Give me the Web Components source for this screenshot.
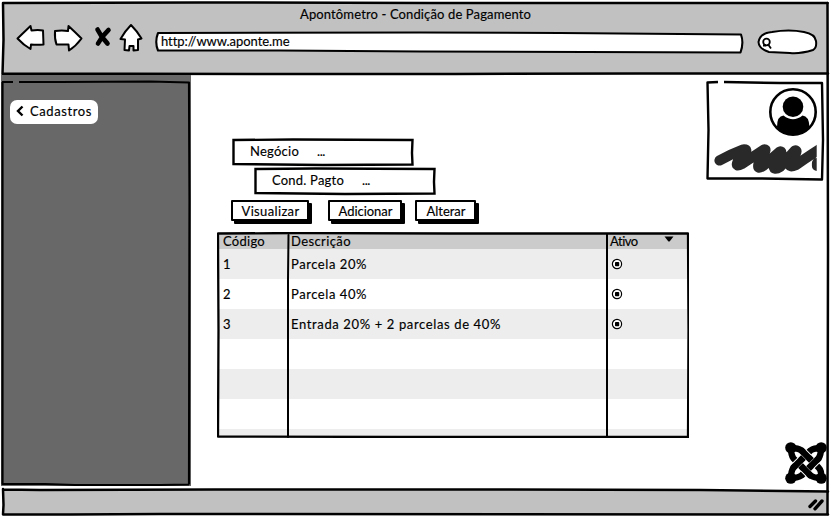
<!DOCTYPE html>
<html lang="pt-BR">
<head>
<meta charset="utf-8">
<title>Apontômetro - Condição de Pagamento</title>
<style>
body{margin:0;background:#fff;color:#000;font:13px/16px Lato,"Open Sans",sans-serif;overflow:hidden}
</style>
</head>
<body>
<app-window></app-window>
<script>
// Shared base: clones a template into an open shadow root.
const define = (name, css, html, setup) => {
  const t = document.createElement('template');
  t.innerHTML = `<style>*{box-sizing:border-box}:host{box-sizing:border-box}svg.art{position:absolute;left:0;top:0;overflow:visible;pointer-events:none}.ink{fill:none;stroke:#000;stroke-width:2.5;stroke-linecap:round;stroke-linejoin:round}${css}</style>${html}`;
  customElements.define(name, class extends HTMLElement {
    constructor() { super(); this.attachShadow({mode: 'open'}).append(t.content.cloneNode(true)); }
    connectedCallback() { if (setup) setup(this, this.shadowRoot); }
  });
};

// Text label whose tracking is adjusted to the width given in "w".
define('ui-label', ':host{display:inline-block;flex:none;white-space:nowrap;height:16px;-webkit-text-stroke:.15px #000}span{display:inline-block}', '<span><slot></slot></span>', (el, root) => {
  const w = +el.getAttribute('w'), s = root.querySelector('span');
  const n = +el.getAttribute('chars') || el.textContent.length;
  el.style.width = w + 'px';
  s.style.letterSpacing = ((w - s.getBoundingClientRect().width) / n).toFixed(3) + 'px';
});

define('nav-icons', ':host{display:flex;width:128px;height:30px}svg{overflow:visible}', `
<svg width="128" height="30" viewBox="16 23 128 30" fill="#fff" stroke="#000" stroke-width="2" stroke-linejoin="round" stroke-linecap="round">
<path d="M17.5 38.5 30.5 26 31.5 30.5Q38 29.500 43 30.500L43.500 44.500Q37 45 31 44.500L30.500 49Q23.500 45 17.500 38.500Z"/>
<path d="M55 31Q62 30 68 31L68.500 26Q75 32 81.500 38.500Q76 46 69 50.500L68.500 44.500 56.500 44.500Q54.500 39 55 31Z"/>
<path d="M97.500 29.500Q101 37 107.500 43.500M108.500 30Q102 36 98 43.500" stroke-width="4.600"/>
<path d="M131 25Q137 31 141.500 38.500L138 39.500 138 50 133.500 50.500 133.500 46 129.500 46 129 50.500 124.500 50 125 39.500 120.500 39Q125 31 131 25Z"/>
</svg>`);

define('address-bar', ':host{display:flex;position:relative;width:588px;height:22px;padding:2px 0 0 6px}ui-label{position:relative}', `
<svg class="art" width="588" height="22" viewBox="155 31 588 22"><path d="M158 33 420 32.500 560 33 741 34.500Q744 43 740.500 52.500L420 51.500 280 50.500 158 50.500Q154.500 42 158 33Z" fill="#fff" stroke="#000" stroke-width="2.100" stroke-linejoin="round"/></svg>
<ui-label w="128">http://www.aponte.me</ui-label>`);

define('search-pill', ':host{display:block;width:60px;height:26px}svg{display:block;overflow:visible}', `
<svg width="60" height="26" viewBox="757 29 60 26" fill="none" stroke="#000" stroke-width="2"><path fill="#fff" d="M772 32Q789 29 804 32 815 34 816 41 817 48 813 50 800 54 790 53L769 52Q759 49 758.500 42 760 33 772 32Z"/><circle cx="766.500" cy="42" r="3.300" stroke-width="1.800"/><path d="m768.500 45 2.500 3.500M763 45.500h3" stroke-width="1.800"/></svg>`);

define('window-header', ':host{display:flex;flex-direction:column;position:relative;height:75px;align-items:center;padding-top:6px}.bar{display:flex;width:831px;position:relative;padding:1px 0 0 16px}ui-label{position:relative}address-bar{margin:8px 0 0 11px}search-pill{margin:6px 0 0 14px}', `
<svg class="art" width="831" height="76"><path d="M3 3 828 3 828 74 2.500 74Z" fill="#c1c1c1"/><path class="ink" d="M3 3 200 2.500 430 3 827.500 3M3 3 3.500 40 2.500 74M2.500 73.500 300 74 455 74 640 73.500 828 73.500"/></svg>
<ui-label w="231">Apontômetro - Condição de Pagamento</ui-label>
<div class="bar"><nav-icons></nav-icons><address-bar></address-bar><search-pill></search-pill></div>`);

define('back-button', ':host{display:flex;width:88px;height:24px;background:#fff;border-radius:7px;align-items:center;padding:0 0 2px 6px}svg{margin-right:6px}', `
<svg width="8" height="12" fill="none" stroke="#000" stroke-width="2.400"><path d="M6.500 1.500 2 6l4.500 4.500"/></svg><ui-label w="62" chars="9"><slot></slot></ui-label>`);

define('side-panel', ':host{display:block;position:relative;width:191px;height:411px;padding:25px 0 0 10px}back-button{position:relative}', `
<svg class="art" width="191" height="411" viewBox="0 75 191 411"><path d="M1 75H191V486H1Z" fill="#686868"/><path class="ink" style="stroke-width:2.200;stroke-linecap:butt" d="M2 82 13 82M19 82 60 82 150 81.500 189 82.500 189.500 200 189 484.500M2.500 82 2.500 484 45 484 75 485 160 485 189 484.500"/></svg>
<back-button>Cadastros</back-button>`);

define('form-field', ':host{display:flex;position:relative;width:180px;height:27px;padding:4px 0 0 17px}ui-label,slot::slotted(*){position:relative}.dots{margin-left:18px}', `
<svg class="art" width="180" height="27"><path d="M.5 1 60 .5 179.500 1 179 14 179.500 25.500 90 26 .5 25 .5 12Z" fill="#fff" stroke="#000" stroke-width="2.400"/></svg>
<slot></slot><ui-label class="dots" w="8">...</ui-label>`);

define('push-button', ':host{display:flex;height:25px;justify-content:center;padding:3px 5px 0 2px;position:relative}.face{position:absolute;inset:0 4px 4px 0;background:#fff;border:2px solid #000;border-radius:1px;box-shadow:3px 3px 0 #000}span{position:relative;white-space:nowrap}', `
<div class="face"></div><span><slot></slot></span>`);

define('radio-mark', ':host{display:inline-flex}', '<svg width="12" height="12"><circle cx="6" cy="6" r="4.600" fill="#fff" stroke="#000" stroke-width="1.200"/><rect x="4" y="4" width="4.200" height="4.200" rx=".8"/></svg>');

define('data-table', `
:host{display:block;position:relative;width:472px;height:206px;padding:2px 2px 2px 1px;overflow:hidden}
.row{display:grid;grid-template-columns:70px 319px 1fr;height:30px;background:#fff;align-items:center}
.row.odd{background:#ededed}.row.head{height:15px;background:#cbcbcb}
.row>div{display:flex;align-items:center;padding-left:5px}.row>div+div{padding-left:3px}
.head svg{margin-left:26px}.head ui-label{margin-top:-2px}radio-mark{margin-left:1px}`, `
<div class="row head"><div><ui-label w="42">Código</ui-label></div><div><ui-label w="60">Descrição</ui-label></div><div><ui-label w="28">Ativo</ui-label><svg width="10" height="6" style="margin-top:-5px"><path d="M.5 .5h9L6 5Q5 6 4 5Z"/></svg></div></div>
<div class="row odd"><div><ui-label w="6">1</ui-label></div><div><ui-label w="76">Parcela 20%</ui-label></div><div><radio-mark></radio-mark></div></div>
<div class="row"><div><ui-label w="8">2</ui-label></div><div><ui-label w="76">Parcela 40%</ui-label></div><div><radio-mark></radio-mark></div></div>
<div class="row odd"><div><ui-label w="8">3</ui-label></div><div><ui-label w="210">Entrada 20% + 2 parcelas de 40%</ui-label></div><div><radio-mark></radio-mark></div></div>
<div class="row"></div><div class="row odd"></div><div class="row"></div><div class="row odd" style="height:8px"></div>
<svg class="art" width="472" height="206" viewBox="217 232 472 206"><path class="ink" style="stroke-width:2.300" d="M218 233.500 300 233 450 233.500 688 233.500 688.500 330 688 437 530 437 400 437 218 436.500 218.500 330Z"/><path class="ink" style="stroke-width:2" d="M288.500 235 288 280 288 437M607 234 607 437"/></svg>`);

define('profile-card', ':host{display:block;width:118px;height:101px}svg{display:block;overflow:visible}svg svg{overflow:hidden}', `
<svg width="118" height="101" viewBox="706 81 118 101"><path d="M707 82H822V179H707Z" fill="#fff"/><path class="ink" style="stroke-width:2.400;stroke-linecap:butt" d="M718 82 707.500 82.500 708.500 130 707.500 178.500 760 178.500 822 179.500 823 140 822 83 780 83 724 82"/>
<circle cx="793" cy="112" r="22.700" fill="#fff" stroke="#000" stroke-width="2.600"/><circle cx="793" cy="106.700" r="10.300"/><path d="M777 127Q777 116 783.500 115.500 793 123 802.500 115.500 809 116 809.500 127Q803 134.500 793 134.500 783 134.500 777 127Z"/>
<svg x="706" y="140" width="110.700" height="36" viewBox="706 140 110.700 36"><path d="M719.500 160.500Q731 154 743 149.500 749 149 744 154L737.500 162Q735 167.500 742 164L764 149.500Q767 149 764 153L758.500 164Q757 170 763 166L780 151.500Q783 151 779 157L773.500 166Q774 171 780 167L795 150.500Q798 150 795 155L789.500 164Q789 168 796 165 806 158 820 149M817 163V166" fill="none" stroke="#292929" stroke-width="10.200" stroke-linecap="round" stroke-linejoin="round"/></svg></svg>`);

define('joomla-mark', ':host{display:block;width:42px;height:42px}svg{display:block;overflow:visible}', `
<svg width="42" height="42" viewBox="-21 -21 42 42" fill="none">
<g fill="#000"><circle cx="-15.200" cy="-15.200" r="5.600"/><circle cx="15.200" cy="-15.200" r="5.600"/><circle cx="-15.200" cy="15.200" r="5.600"/><circle cx="15.200" cy="15.200" r="5.600"/></g>
<g stroke="#000" stroke-width="6.400"><path d="M-15-15Q-8-15-4.500-12.500L12.500 4.500Q16 8 15 15M-15-15Q-15-8-12.500-4.500L4.500 12.500Q8 15 15 15M15-15Q8-15 4.500-12.500L-12.500 4.500Q-15 8-15 15M15-15Q15-8 12.500-4.500L-4.500 12.500Q-8 15-15 15"/></g>
<g stroke="#fff" stroke-width="8.200"><path d="M-2.500-10.500 2.500-5.500M2.500 10.500-2.500 5.500M-10.500 2.500-5.500-2.500M10.500-2.500 5.500 2.500"/></g>
<g stroke="#000" stroke-width="6.400"><path d="M-5.500-13.500 5.500-2.500M5.500 13.500-5.500 2.500M-13.500 5.500-2.500-5.500M13.500-5.500 2.500 5.500"/></g></svg>`);

define('status-bar', ':host{display:flex;position:relative;height:31px;justify-content:flex-end;padding:12px 6px 0}.grip{position:relative}', `
<svg class="art" width="831" height="31" viewBox="0 486 831 31"><path d="M3 489.500 215 489 500 490 828 492V514.500L3 514.500Z" fill="#c1c1c1"/><path class="ink" d="M3 489.500 40 490 215 489.500 500 489.500 700 490 828 491.500M3 489 3.500 505 3 514.500 70 514.500 160 514 828 514.500"/></svg>
<svg class="grip" width="17" height="13" fill="none" stroke="#000" stroke-width="3.400" stroke-linecap="round"><path d="M2 8.500 7.500 3M7 10.800 14 3"/></svg>`);

define('main-view', ':host{display:grid;grid-template-columns:1fr 125px;height:411px;flex:1}.form{padding:64px 0 0 26px}.first{margin-left:16px}.second{margin:2px 0 0 38px}.buttons{display:flex;padding:5px 0 0 14px}.buttons>*:nth-child(1){width:82px}.buttons>*:nth-child(2){width:78px;margin-left:15px}.buttons>*:nth-child(3){width:65px;margin-left:9px}data-table{margin-top:7px}.side{display:flex;flex-direction:column;justify-content:space-between;align-items:flex-end;padding:6px 7px 2px 0}joomla-mark{margin-right:-3px}', `
<div class="form"><form-field class="first"><ui-label w="49">Negócio</ui-label></form-field><form-field class="second"><ui-label w="72">Cond. Pagto</ui-label></form-field>
<div class="buttons"><push-button><ui-label w="58">Visualizar</ui-label></push-button><push-button><ui-label w="54">Adicionar</ui-label></push-button><push-button><ui-label w="39">Alterar</ui-label></push-button></div>
<data-table></data-table></div>
<div class="side"><profile-card></profile-card><joomla-mark></joomla-mark></div>`);

define('app-window', ':host{display:flex;flex-direction:column;position:relative;width:831px;height:517px;background:#fff}.body{display:flex}', `
<window-header></window-header><div class="body"><side-panel></side-panel><main-view></main-view></div><status-bar></status-bar>
<svg class="art" width="831" height="517"><path class="ink" d="M827.500 3 828 250 827.500 514"/></svg>`);
</script>
</body>
</html>
